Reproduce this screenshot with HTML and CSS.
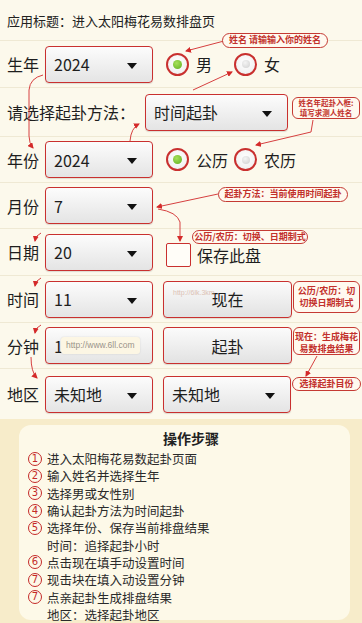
FILE: index.html
```html
<!DOCTYPE html>
<html lang="zh">
<head>
<meta charset="utf-8">
<link rel="stylesheet" href="styles.css">
</head>
<body>
<div class="page">
  <div class="title">应用标题：进入太阳梅花易数排盘页</div>
  <div class="form">
    <div class="row row-1">
      <span class="label">生年</span>
      <div class="select sel-s"><span>2024</span><i class="caret"></i></div>
      <div class="radio first"><span class="dot on"></span><span class="rtext">男</span></div>
      <div class="radio"><span class="dot"></span><span class="rtext">女</span></div>
    </div>
    <div class="row row-2">
      <span class="label label-wide">请选择起卦方法：</span>
      <div class="select sel-m"><span>时间起卦</span><i class="caret"></i></div>
    </div>
    <div class="row row-46">
      <span class="label">年份</span>
      <div class="select sel-s"><span>2024</span><i class="caret"></i></div>
      <div class="radio first"><span class="dot on"></span><span class="rtext">公历</span></div>
      <div class="radio"><span class="dot"></span><span class="rtext">农历</span></div>
    </div>
    <div class="row row-46">
      <span class="label">月份</span>
      <div class="select sel-s"><span>7</span><i class="caret"></i></div>
    </div>
    <div class="row">
      <span class="label">日期</span>
      <div class="select sel-s"><span>20</span><i class="caret"></i></div>
      <div class="check"><span class="box"></span><span class="ctext">保存此盘</span></div>
    </div>
    <div class="row">
      <span class="label">时间</span>
      <div class="select sel-s"><span>11</span><i class="caret"></i></div>
      <div class="btn"><span class="wm">http://6lk.3km</span>现在</div>
    </div>
    <div class="row row-46">
      <span class="label">分钟</span>
      <div class="select sel-s input"><span>1</span><span class="tip">http://www.6ll.com</span></div>
      <div class="btn">起卦</div>
    </div>
    <div class="row row-8">
      <span class="label">地区</span>
      <div class="select sel-s"><span>未知地</span><i class="caret"></i></div>
      <div class="select sel-r"><span>未知地</span><i class="caret"></i></div>
    </div>
  </div>
  <div class="band">
    <div class="card">
      <div class="card-title">操作步骤</div>
      <ul class="steps">
        <li><span class="num">1</span>进入太阳梅花易数起卦页面</li>
        <li><span class="num">2</span>输入姓名并选择生年</li>
        <li><span class="num">3</span>选择男或女性别</li>
        <li><span class="num">4</span>确认起卦方法为时间起卦</li>
        <li><span class="num">5</span>选择年份、保存当前排盘结果</li>
        <li class="sub">时间：追择起卦小时</li>
        <li><span class="num">6</span>点击现在填手动设置时间</li>
        <li><span class="num">7</span>现击块在填入动设置分钟</li>
        <li><span class="num">7</span>点亲起卦生成排盘结果</li>
        <li class="sub">地区：选择起卦地区</li>
      </ul>
    </div>
  </div>

  <svg class="arrows" width="362" height="623" viewBox="0 0 362 623">
    <defs>
      <marker id="ah" markerWidth="6" markerHeight="6" refX="5" refY="3" orient="auto" markerUnits="userSpaceOnUse">
        <path d="M0,0 L6,3 L0,6 Z" fill="#d42a2a"/>
      </marker>
    </defs>
    <g fill="none" stroke="#d64040" stroke-width="1" marker-end="url(#ah)">
      <path d="M43,75 Q30,78 29,90 L29,136 Q29,143 33,148"/>
      <path d="M130,141 Q131,128 139,124"/>
      <path d="M224,41 L186,51"/>
      <path d="M193,90 L232,72"/>
      <path d="M313,120 L311,132 L256,145"/>
      <path d="M218,194 L157,207"/>
      <path d="M158,209 Q177,212 180,222 L180,241"/>
      <path d="M41,233 Q36,235 35,241"/>
      <path d="M41,278 Q36,280 35,286"/>
      <path d="M41,325 Q36,327 35,333"/>
      <path d="M31,357 Q31,372 37,378"/>
      <path d="M317,356 L306,376"/>
    </g>
  </svg>

  <div class="bubble b-a">姓名 请输输入你的姓名</div>
  <div class="bubble b-b two small">姓名年起卦入框:<br>填写求测人姓名</div>
  <div class="bubble b-c">起卦方法：当前使用时间起卦</div>
  <div class="bubble b-d">公历/农历：切换、日期制式</div>
  <div class="bubble b-e two">公历/农历：切<br>切换日期制式</div>
  <div class="bubble b-f two">现在：生成梅花<br>易数排盘结果</div>
  <div class="bubble b-g">选择起卦目份</div>
</div>
</body>
</html>
```

FILE: styles.css
```css
* { box-sizing: border-box; }
html, body { margin: 0; padding: 0; }
body {
  background: #fcf9ec;
  font-family: "Noto Sans CJK SC", "Noto Sans", sans-serif;
  color: #222;
}
.page {
  position: relative;
  width: 362px;
  height: 623px;
  overflow: hidden;
}
.title {
  height: 41px;
  padding: 11px 0 0 7px;
  font-size: 13px;
  line-height: 20px;
  color: #222;
  border-bottom: 1px solid #efe9d4;
}
.row {
  display: flex;
  align-items: center;
  height: 47px;
  padding-left: 7px;
  border-bottom: 1px solid #efe9d4;
}
.row-1 { height: 47px; }
.row-2 { height: 49px; }
.row-46 { height: 46px; }
.row-8 { height: 50px; border-bottom: none; }
.label {
  width: 38px;
  font-size: 16px;
  line-height: 20px;
  flex: none;
  color: #1e1e1e;
}
.label-wide { width: 138px; }
.select {
  position: relative;
  display: flex;
  align-items: center;
  height: 37px;
  padding-left: 8px;
  border: 1.5px solid #c9302f;
  border-radius: 4px;
  background: linear-gradient(#fcfcfc, #e4e4e4);
  font-size: 16px;
  color: #1e1e1e;
  flex: none;
  box-shadow: 0 1px 1px rgba(0,0,0,0.12);
}
.sel-s { width: 108px; }
.sel-m { width: 143px; }
.sel-r { width: 128px; margin-left: 10px; }
.caret {
  position: absolute;
  right: 15px;
  top: 16px;
  width: 0;
  height: 0;
  border-left: 5px solid transparent;
  border-right: 5px solid transparent;
  border-top: 6px solid #111;
}
.input .tip {
  position: absolute;
  left: 15px;
  top: 9px;
  height: 17px;
  padding: 0 5px;
  font-size: 8.5px;
  line-height: 17px;
  color: #9a948a;
  background: #fcf6e4;
  border-radius: 3px;
  box-shadow: 0 0 2px rgba(0,0,0,0.12);
  font-family: "Liberation Sans", sans-serif;
}
.radio {
  display: flex;
  align-items: center;
  width: 68px;
  flex: none;
}
.radio.first { margin-left: 13px; }
.dot {
  display: block;
  position: relative;
  width: 23px;
  height: 23px;
  border: 2px solid #c9302f;
  border-radius: 50%;
  background: radial-gradient(circle at 50% 40%, #ffffff, #ececec);
  flex: none;
}
.dot::after {
  content: "";
  position: absolute;
  left: 5.5px;
  top: 5.5px;
  width: 8px;
  height: 8px;
  border-radius: 50%;
  background: radial-gradient(circle at 40% 35%, #f4f4f4, #cfcfcf);
}
.dot.on::after {
  left: 5px;
  top: 5px;
  width: 9px;
  height: 9px;
  background: radial-gradient(circle at 40% 35%, #a6e05a, #5fae1f);
}
.rtext {
  margin-left: 7px;
  font-size: 16px;
  color: #1e1e1e;
}
.check {
  display: flex;
  align-items: center;
  margin-left: 13px;
  padding-top: 6px;
}
.box {
  display: block;
  width: 25px;
  height: 24px;
  border: 1.5px solid #c9302f;
  border-radius: 2px;
  background: #fffdf8;
}
.ctext {
  margin-left: 6px;
  font-size: 16px;
  color: #1e1e1e;
}
.btn {
  position: relative;
  display: flex;
  align-items: center;
  justify-content: center;
  width: 129px;
  height: 37px;
  margin-left: 10px;
  border: 1.5px solid #c9302f;
  border-radius: 4px;
  background: linear-gradient(#fbfbfb, #e2e2e2);
  font-size: 16px;
  color: #1e1e1e;
  box-shadow: 0 1px 1px rgba(0,0,0,0.12);
}
.wm {
  position: absolute;
  left: 9px;
  top: 7px;
  font-size: 7px;
  color: #dcc2b4;
  font-family: "Liberation Sans", sans-serif;
}
.band {
  position: absolute;
  left: 0;
  top: 419px;
  width: 362px;
  height: 204px;
  background: #f7ecca;
  padding: 6px 12px 3px 19px;
}
.card {
  height: 195px;
  background: #fdf9e8;
  border-radius: 12px;
  padding: 3px 0 0 9px;
}
.card-title {
  text-align: center;
  font-size: 14px;
  font-weight: bold;
  line-height: 20px;
  color: #222;
  padding-left: 4px;
}
.steps {
  list-style: none;
  margin: 2px 0 0 0;
  padding: 0;
}
.steps li {
  display: flex;
  align-items: center;
  height: 17.3px;
  font-size: 12.5px;
  line-height: 17px;
  color: #2a2a2a;
}
.steps li.sub { padding-left: 19px; }
.num {
  display: inline-flex;
  align-items: center;
  justify-content: center;
  width: 14px;
  height: 14px;
  margin-right: 5px;
  border: 1.2px solid #c42a28;
  border-radius: 50%;
  font-size: 10px;
  line-height: 1;
  color: #c42a28;
  font-family: "DejaVu Sans", sans-serif;
}
.arrows {
  position: absolute;
  left: 0;
  top: 0;
  pointer-events: none;
}
.bubble {
  position: absolute;
  border: 1.2px solid #c53a33;
  border-radius: 8px;
  background: #fff9ef;
  color: #c2302b;
  font-size: 9px;
  font-weight: bold;
  line-height: 12px;
  text-align: center;
  white-space: nowrap;
}
.bubble.two { border-radius: 6px; line-height: 11.5px; padding-top: 3px; }
.bubble.small { font-size: 7.5px; line-height: 9.5px; padding-top: 0; }
.b-a { left: 222px; top: 33px; width: 106px; height: 15px; }
.b-b { left: 292px; top: 97px; width: 68px; height: 22px; }
.b-c { left: 218px; top: 187px; width: 130px; height: 15px; }
.b-d { left: 192px; top: 230px; width: 116px; height: 14px; }
.b-e { left: 293px; top: 281px; width: 67px; height: 32px; padding-top: 4px; line-height: 12px; }
.b-f { left: 293px; top: 327px; width: 67px; height: 28px; padding-top: 1px; line-height: 12.5px; }
.b-g { left: 292px; top: 377px; width: 69px; height: 14px; }
```
